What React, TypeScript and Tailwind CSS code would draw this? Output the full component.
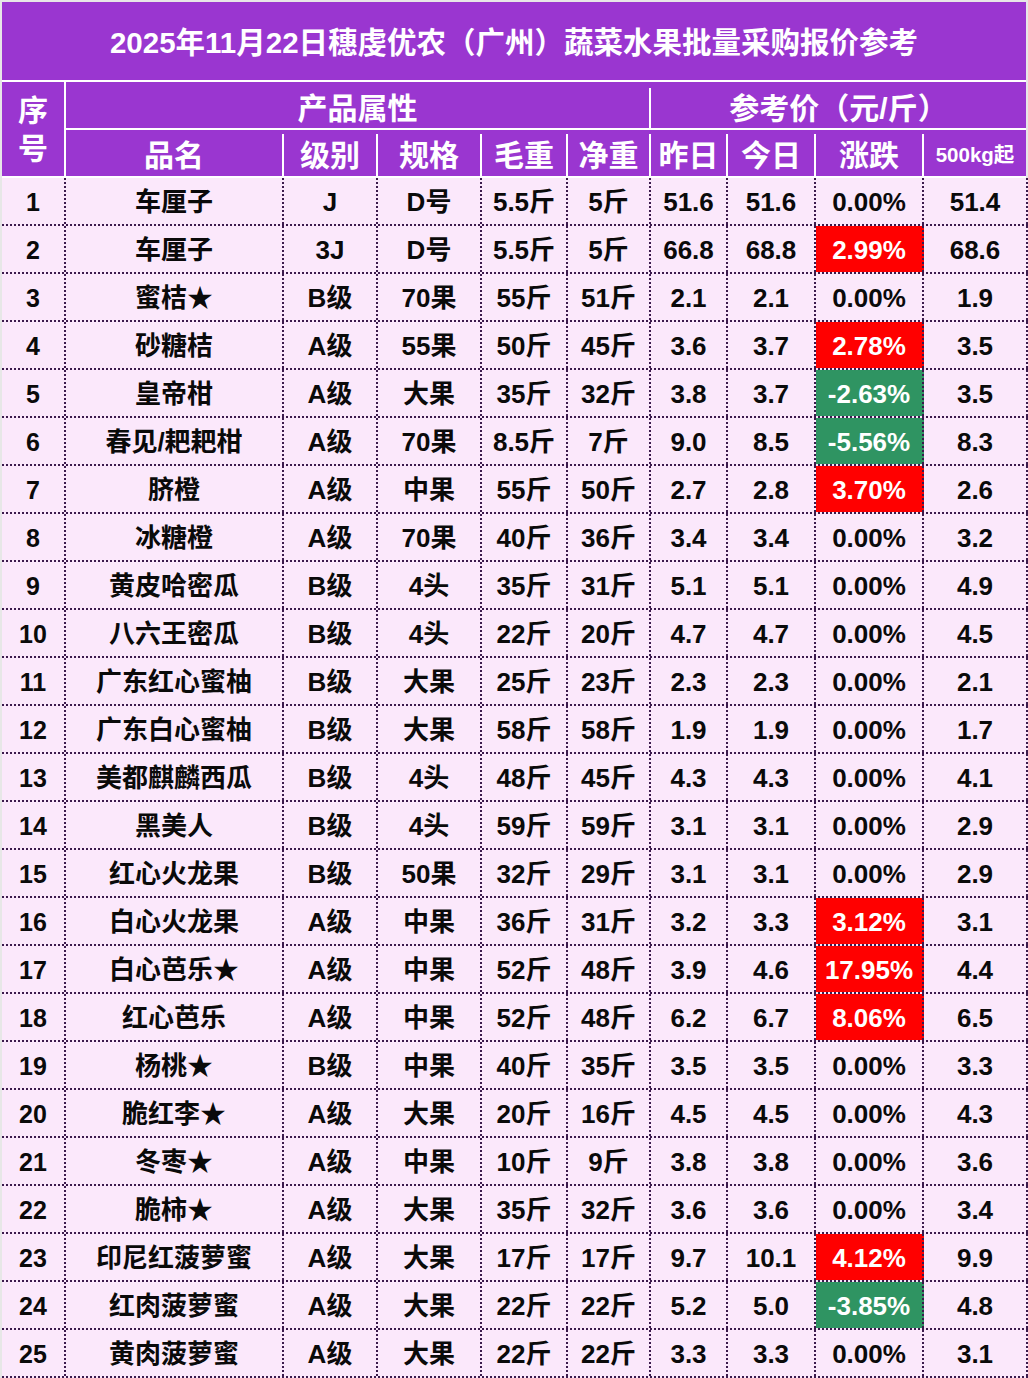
const rows: [string, string, string, string, string, string, string, string, string, string][] = [
  ["1", "车厘子", "J", "D号", "5.5斤", "5斤", "51.6", "51.6", "0.00%", "51.4"],
  ["2", "车厘子", "3J", "D号", "5.5斤", "5斤", "66.8", "68.8", "2.99%", "68.6"],
  ["3", "蜜桔★", "B级", "70果", "55斤", "51斤", "2.1", "2.1", "0.00%", "1.9"],
  ["4", "砂糖桔", "A级", "55果", "50斤", "45斤", "3.6", "3.7", "2.78%", "3.5"],
  ["5", "皇帝柑", "A级", "大果", "35斤", "32斤", "3.8", "3.7", "-2.63%", "3.5"],
  ["6", "春见/耙耙柑", "A级", "70果", "8.5斤", "7斤", "9.0", "8.5", "-5.56%", "8.3"],
  ["7", "脐橙", "A级", "中果", "55斤", "50斤", "2.7", "2.8", "3.70%", "2.6"],
  ["8", "冰糖橙", "A级", "70果", "40斤", "36斤", "3.4", "3.4", "0.00%", "3.2"],
  ["9", "黄皮哈密瓜", "B级", "4头", "35斤", "31斤", "5.1", "5.1", "0.00%", "4.9"],
  ["10", "八六王密瓜", "B级", "4头", "22斤", "20斤", "4.7", "4.7", "0.00%", "4.5"],
  ["11", "广东红心蜜柚", "B级", "大果", "25斤", "23斤", "2.3", "2.3", "0.00%", "2.1"],
  ["12", "广东白心蜜柚", "B级", "大果", "58斤", "58斤", "1.9", "1.9", "0.00%", "1.7"],
  ["13", "美都麒麟西瓜", "B级", "4头", "48斤", "45斤", "4.3", "4.3", "0.00%", "4.1"],
  ["14", "黑美人", "B级", "4头", "59斤", "59斤", "3.1", "3.1", "0.00%", "2.9"],
  ["15", "红心火龙果", "B级", "50果", "32斤", "29斤", "3.1", "3.1", "0.00%", "2.9"],
  ["16", "白心火龙果", "A级", "中果", "36斤", "31斤", "3.2", "3.3", "3.12%", "3.1"],
  ["17", "白心芭乐★", "A级", "中果", "52斤", "48斤", "3.9", "4.6", "17.95%", "4.4"],
  ["18", "红心芭乐", "A级", "中果", "52斤", "48斤", "6.2", "6.7", "8.06%", "6.5"],
  ["19", "杨桃★", "B级", "中果", "40斤", "35斤", "3.5", "3.5", "0.00%", "3.3"],
  ["20", "脆红李★", "A级", "大果", "20斤", "16斤", "4.5", "4.5", "0.00%", "4.3"],
  ["21", "冬枣★", "A级", "中果", "10斤", "9斤", "3.8", "3.8", "0.00%", "3.6"],
  ["22", "脆柿★", "A级", "大果", "35斤", "32斤", "3.6", "3.6", "0.00%", "3.4"],
  ["23", "印尼红菠萝蜜", "A级", "大果", "17斤", "17斤", "9.7", "10.1", "4.12%", "9.9"],
  ["24", "红肉菠萝蜜", "A级", "大果", "22斤", "22斤", "5.2", "5.0", "-3.85%", "4.8"],
  ["25", "黄肉菠萝蜜", "A级", "大果", "22斤", "22斤", "3.3", "3.3", "0.00%", "3.1"],
];

// column widths incl. right border
const widths = ["w-[64px]", "w-[218px]", "w-[94px]", "w-[104px]", "w-[86px]", "w-[83px]", "w-[77px]", "w-[88px]", "w-[108px]", "w-[104px]"];

function changeBg(v: string) {
  if (v === "0.00%") return "";
  if (v.startsWith("-")) return "bg-[#2f9462] text-white";
  return "bg-[#ff0000] text-white";
}

function HeadCell({ w, children, last }: { w: string; children: React.ReactNode; last?: boolean }) {
  return (
    <div className={`${w} flex h-full items-center justify-center ${last ? "" : "border-r-2 border-white"}`}>
      {children}
    </div>
  );
}

export default function App() {
  return (
    <div className="w-[1028px] bg-[#e7e7e7] pl-[2px] pt-[2px] font-[family-name:'Liberation_Sans','Noto_Sans_CJK_SC',sans-serif] font-bold">
      <div className="flex h-[80px] w-[1024px] items-center justify-center border-b-2 border-white bg-[#9a36d0] pt-[5px] text-[29.5px] text-white">
        2025年11月22日穗虔优农（广州）蔬菜水果批量采购报价参考
      </div>

      <div className="flex h-[96px] w-[1024px] border-b-2 border-white bg-[#9a36d0] text-white">
        <div className="flex w-[64px] flex-col items-center justify-center border-r-2 border-white pt-[2px] text-[30px] leading-[38px]">
          <span>序</span>
          <span>号</span>
        </div>
        <div className="flex flex-1 flex-col">
          <div className="flex h-[48px] border-b-2 border-white pt-[6px] text-[30px]">
            <HeadCell w="w-[585px]">产品属性</HeadCell>
            <HeadCell w="w-[375px]" last>参考价（元/斤）</HeadCell>
          </div>
          <div className="flex h-[46px] pt-[4px] text-[30px]">
            <HeadCell w="w-[218px]">品名</HeadCell>
            <HeadCell w="w-[94px]">级别</HeadCell>
            <HeadCell w="w-[104px]">规格</HeadCell>
            <HeadCell w="w-[86px]">毛重</HeadCell>
            <HeadCell w="w-[83px]">净重</HeadCell>
            <HeadCell w="w-[77px]">昨日</HeadCell>
            <HeadCell w="w-[88px]">今日</HeadCell>
            <HeadCell w="w-[108px]">涨跌</HeadCell>
            <HeadCell w="w-[102px]" last>
              <span className="text-[20.5px]">500kg起</span>
            </HeadCell>
          </div>
        </div>
      </div>

      <div className="w-[1026px] bg-[#fbe8fb] text-[26px] text-[#0a0a0a]">
        {rows.map((r) => (
          <div key={r[0]} className="flex h-[48px] border-b-2 border-dotted border-[#3b1a4c]">
            {r.map((v, i) => (
              <div
                key={i}
                className={`${widths[i]} flex items-center justify-center border-r-2 border-dotted border-[#3b1a4c] pt-[3px] ${i === 0 ? "text-[25px]" : ""} ${i === 8 ? changeBg(v) : ""}`}
              >
                {v}
              </div>
            ))}
          </div>
        ))}
      </div>
    </div>
  );
}
